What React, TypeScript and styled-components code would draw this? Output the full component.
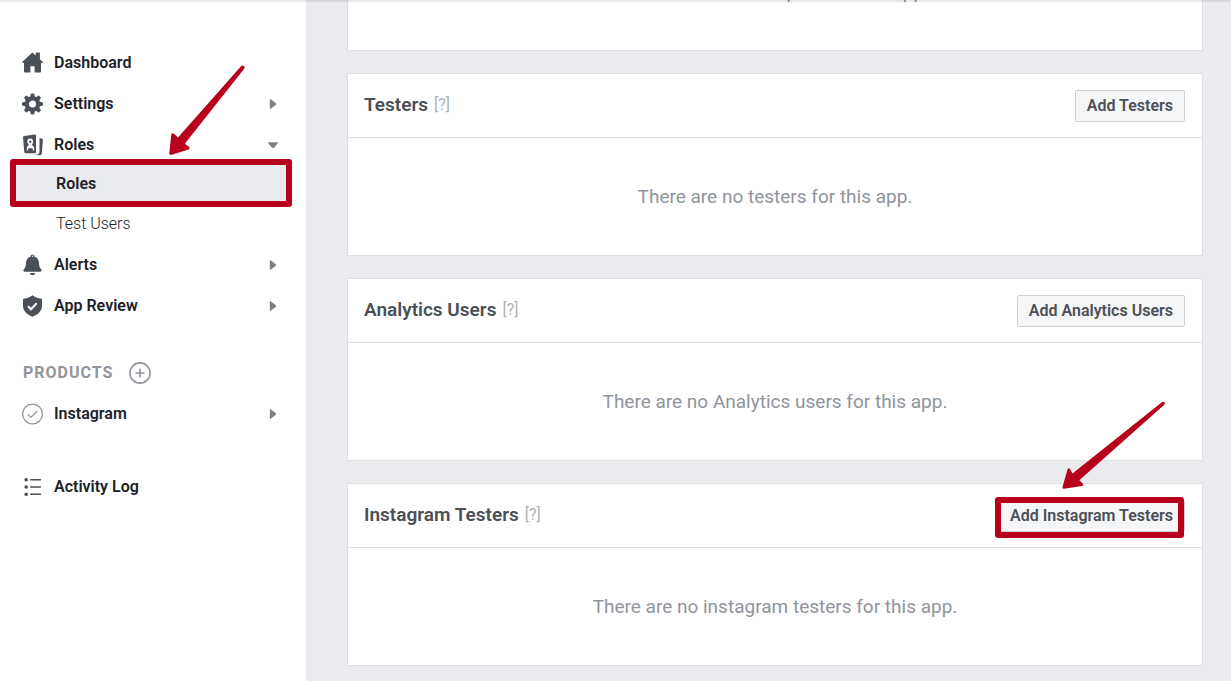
import React from "react";
import styled, { createGlobalStyle, css } from "styled-components";

const GlobalStyle = createGlobalStyle`
  * { box-sizing: border-box; }
  body {
    margin: 0;
    background: #e9ebee;
    font-family: Roboto, "Liberation Sans", sans-serif;
    font-size: 16px;
    line-height: 20px;
    color: #1d2129;
  }
  a { color: inherit; text-decoration: none; }
  ul { list-style: none; margin: 0; padding: 0; }
`;

const Page = styled.div`
  position: relative;
  display: flex;
  height: 100vh;
  overflow: hidden;
`;

const ScrollShadow = styled.div`
  position: absolute;
  top: 0;
  left: 0;
  right: 0;
  height: 3px;
  background: linear-gradient(rgba(0, 0, 0, 0.12), rgba(0, 0, 0, 0));
  pointer-events: none;
`;

const Sidebar = styled.nav`
  position: relative;
  flex: 0 0 306px;
  padding: 42px 28px 0 22px;
  background: #fff;
`;

const NavLink = styled.a`
  display: flex;
  align-items: center;
  gap: 10px;
  height: 41px;
  font-weight: 600;
`;

const NavLabel = styled.span`
  flex: 1;
`;

const SubMenu = styled.ul`
  margin: -1px -14px 0 -12px;
`;

const SubLink = styled.a<{ $active?: boolean }>`
  position: relative;
  display: flex;
  align-items: center;
  height: 40px;
  padding-left: 46px;
  font-weight: 300;
  ${({ $active }) =>
    $active &&
    css`
      background: #e9ebee;
      font-weight: 600;
      &::after {
        content: "";
        position: absolute;
        inset: -5px 0 -3px;
        border: 6px solid #b8001c;
        border-radius: 3px;
      }
    `}
`;

const SectionHeading = styled.div`
  display: flex;
  align-items: center;
  gap: 16px;
  height: 40px;
  margin-top: 27px;
`;

const SectionName = styled.h2`
  margin: 0;
  padding-left: 1px;
  font-size: 16px;
  font-weight: 700;
  letter-spacing: 1px;
  color: #90949c;
`;

const IconButton = styled.button`
  display: flex;
  padding: 0;
  border: 0;
  background: none;
`;

const LogGroup = styled.div`
  margin-top: 32px;
`;

const Main = styled.main`
  position: relative;
  flex: 1;
  min-width: 0;
  display: flex;
  flex-direction: column;
  gap: 22px;
  padding: 0 28px 0 41px;
`;

const Card = styled.section<{ $scrolled?: boolean }>`
  flex: none;
  background: #fff;
  border: 1px solid #dddfe2;
  margin-top: ${({ $scrolled }) => ($scrolled ? "-68px" : "0")};
`;

const CardHeader = styled.header`
  display: flex;
  align-items: center;
  justify-content: space-between;
  height: 64px;
  padding: 0 17px 0 16px;
  border-bottom: 1px solid #dddfe2;
`;

const CardTitle = styled.h3`
  display: flex;
  align-items: center;
  gap: 6px;
  margin: 0;
  padding-bottom: 2px;
  font-size: 19px;
  font-weight: 600;
  color: #4b4f56;
`;

const HelpLink = styled.a`
  font-size: 16px;
  font-weight: 400;
  color: #b0b2b6;
`;

const Empty = styled.p`
  display: flex;
  align-items: center;
  justify-content: center;
  height: 117px;
  margin: 0;
  font-size: 19px;
  color: #90949c;
`;

const ActionWrap = styled.div`
  position: relative;
  display: flex;
`;

const ActionButton = styled.button`
  height: 32px;
  padding: 0 11px;
  border: 1px solid #ced0d4;
  border-radius: 2px;
  background: #f5f6f7;
  font: 600 16px/20px Roboto, "Liberation Sans", sans-serif;
  color: #4b4f56;
`;

const ActionMark = styled.span`
  position: absolute;
  inset: -3px 1px -6px -3px;
  border: 6px solid #b8001c;
  border-radius: 3px;
  pointer-events: none;
`;

const SidebarArrow = styled.svg`
  position: absolute;
  left: 168px;
  top: 64px;
  pointer-events: none;
`;

const ActionArrow = styled.svg`
  position: absolute;
  right: 18px;
  top: -100px;
  pointer-events: none;
`;

const Icon = ({ children }: { children: React.ReactNode }) => (
  <svg width="22" height="22" viewBox="0 0 22 22" fill="#4b4f56" aria-hidden="true">
    {children}
  </svg>
);

const HomeIcon = () => (
  <Icon>
    <path d="M10.3.5 13.7 3.5V1.2q0-.7.7-.7h2.8q.7 0 .7.7v6l3 2.7q.5.8-.4.9H19v8.8q0 1-1 1h-5.4v-6.4H8.4v6.4H3q-1 0-1-1v-8.8H.6Q-.3 10.7.2 9.9Z" />
  </Icon>
);

const GearIcon = () => (
  <Icon>
    <circle cx="10.5" cy="11" r="5.6" fill="none" stroke="#4b4f56" strokeWidth="4.2" />
    {[0, 45, 90, 135, 180, 225, 270, 315].map((angle) => (
      <path
        key={angle}
        transform={`rotate(${angle} 10.5 11)`}
        d="M8 4.6 8.7 1.2Q8.8.5 9.5.5h2q.7 0 .8.7L13 4.6Z"
      />
    ))}
  </Icon>
);

const BadgeIcon = () => (
  <Icon>
    <path d="M2 1.9 12.8.4q1.2-.1 1.2 1V18q0 1.300-1.300 1.300H3.600q-1.200 0-1.300-1.200L1 3.400Q.9 2.100 2 1.900Z" />
    <path
      fill="#fff"
      d="M8.200 4.600c1.900 0 2.900 1.200 2.900 3 0 1.300-.5 2.300-1.200 2.900 0 1 2.300 1.500 2.300 3.500v2.600H10.900l-.4-2.300H6.400l-.3 2.300H4.800V14c0-2 2-2.500 2-3.500-.9-.7-1.500-1.600-1.500-2.900 0-1.800 1-3 2.900-3Z"
    />
    <circle cx="8.200" cy="7.700" r="1.200" />
    <path d="M17.500 4.300 19.800 4.600q1.200.2 1.100 1.500L19.800 19.600q-.2 1.700-1.900 1.600L10.800 20.600h3.400q3.300-.2 3.300-3.200Z" />
  </Icon>
);

const BellIcon = () => (
  <Icon>
    <path d="M10.500.5q2 0 2.100 2.300c3.300 1 4.300 3.800 4.500 7.200.2 3 .9 4 2 5.200.9 1.100.5 2.500-1.100 2.500H3c-1.600 0-2-1.400-1.100-2.500 1.100-1.200 1.800-2.200 2-5.200.2-3.400 1.200-6.200 4.500-7.200Q8.500.5 10.500.5Z" />
    <circle cx="10.500" cy="2.300" r=".7" fill="#fff" />
    <path d="M7.700 19h5.600q-.5 2.200-2.800 2.200T7.700 19Z" />
  </Icon>
);

const ShieldIcon = () => (
  <Icon>
    <path d="M10.500.2c2.300 1.900 4.900 3 8.300 3.300q1.200.1 1.200 1.300v5.700c0 5.400-3.700 8.800-9.500 11.300C4.700 19.300 1 15.900 1 10.500V4.800q0-1.200 1.200-1.300C5.600 3.200 8.200 2.100 10.500.2Z" />
    <path d="m6 11.300 3 3 5.700-6" fill="none" stroke="#fff" strokeWidth="2" />
  </Icon>
);

const PlusIcon = () => (
  <Icon>
    <g fill="none" stroke="#90949c" strokeWidth="1.600">
      <circle cx="11" cy="11" r="10.100" />
      <path d="M11 6.500v9M6.500 11h9" />
    </g>
  </Icon>
);

const CheckIcon = () => (
  <Icon>
    <g fill="none" stroke="#90949c" strokeWidth="1.300">
      <circle cx="10.500" cy="11" r="9.900" />
      <path d="m5.800 11.200 3.200 3 6.400-6.300" />
    </g>
  </Icon>
);

const ListIcon = () => (
  <Icon>
    <circle cx="4.200" cy="3.700" r="1.800" />
    <circle cx="4.200" cy="11" r="1.800" />
    <circle cx="4.200" cy="18.300" r="1.800" />
    <path d="M8.700 3.700h9.600M8.700 11h9.600M8.700 18.300h9.600" stroke="#4b4f56" strokeWidth="1.600" strokeLinecap="round" />
  </Icon>
);

const Caret = ({ open }: { open?: boolean }) => (
  <svg width="10" height="10" viewBox="0 0 10 10" fill="#7f7f7f" aria-hidden="true">
    <path d={open ? "M.5 2.300h9q.6.6 0 1.200L6.200 7.400q-1.200 1-2.400 0L.5 3.500q-.6-.6 0-1.200Z" : "M1.800.4q.6-.4 1.200 0L7.600 4q1 1 0 2L3 9.600q-.6.400-1.200 0Z"} />
  </svg>
);

type NavEntryProps = {
  icon: React.ReactNode;
  label: string;
  caret?: "closed" | "open";
};

const NavEntry = ({ icon, label, caret }: NavEntryProps) => (
  <NavLink href="#">
    {icon}
    <NavLabel>{label}</NavLabel>
    {caret && <Caret open={caret === "open"} />}
  </NavLink>
);

type RoleCardProps = {
  title: string;
  empty: string;
  marked?: boolean;
};

const RoleCard = ({ title, empty, marked }: RoleCardProps) => (
  <Card>
    <CardHeader>
      <CardTitle>
        {title}
        <HelpLink href="#">[?]</HelpLink>
      </CardTitle>
      <ActionWrap>
        <ActionButton type="button">Add {title}</ActionButton>
        {marked && (
          <>
            <ActionMark />
            <ActionArrow width="106" height="92" viewBox="1061 400 106 92" fill="#b8001c" aria-hidden="true">
              <path d="M1161.500 402.400Q1163.500 401 1164.700 402.500 1165.300 403.800 1164 405L1079.300 480.200 1083 483.700Q1084 485.500 1082 486L1064 488.800Q1062 488.900 1062.500 487L1067.500 469.500Q1068.500 467.500 1070 469L1072.500 473.500Z" />
            </ActionArrow>
          </>
        )}
      </ActionWrap>
    </CardHeader>
    <Empty>{empty}</Empty>
  </Card>
);

export default function App() {
  return (
    <>
      <GlobalStyle />
      <Page>
        <Sidebar>
          <ul>
            <li><NavEntry icon={<HomeIcon />} label="Dashboard" /></li>
            <li><NavEntry icon={<GearIcon />} label="Settings" caret="closed" /></li>
            <li>
              <NavEntry icon={<BadgeIcon />} label="Roles" caret="open" />
              <SubMenu>
                <li><SubLink href="#" $active>Roles</SubLink></li>
                <li><SubLink href="#">Test Users</SubLink></li>
              </SubMenu>
            </li>
            <li><NavEntry icon={<BellIcon />} label="Alerts" caret="closed" /></li>
            <li><NavEntry icon={<ShieldIcon />} label="App Review" caret="closed" /></li>
          </ul>
          <SectionHeading>
            <SectionName>PRODUCTS</SectionName>
            <IconButton type="button" aria-label="Add product"><PlusIcon /></IconButton>
          </SectionHeading>
          <NavEntry icon={<CheckIcon />} label="Instagram" caret="closed" />
          <LogGroup>
            <NavEntry icon={<ListIcon />} label="Activity Log" />
          </LogGroup>
          <SidebarArrow width="78" height="93" viewBox="168 64 78 93" fill="#b8001c" aria-hidden="true">
            <path d="M240.800 66.500Q242.500 64.800 244 66 245.300 67.200 244 69L184.800 143.800 189 146.700Q190.500 148.500 188.500 149.500L171 155Q169 155 169.300 153L171.300 134.500Q172.300 132.300 174 133.700L178 137.500Z" />
          </SidebarArrow>
        </Sidebar>
        <Main>
          <Card $scrolled>
            <Empty>There are no developers for this app.</Empty>
          </Card>
          <RoleCard title="Testers" empty="There are no testers for this app." />
          <RoleCard title="Analytics Users" empty="There are no Analytics users for this app." />
          <RoleCard title="Instagram Testers" empty="There are no instagram testers for this app." marked />
        </Main>
        <ScrollShadow />
      </Page>
    </>
  );
}
